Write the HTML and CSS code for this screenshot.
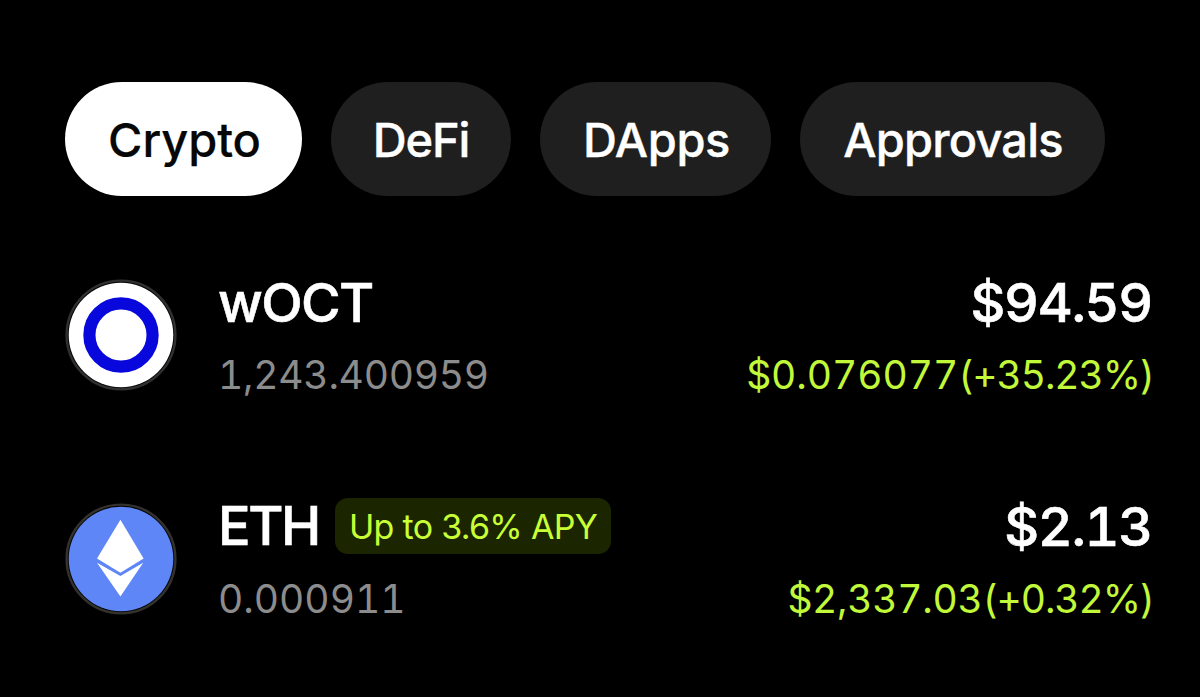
FILE: index.html
```html
<!DOCTYPE html>
<html lang="en">
<head>
<meta charset="utf-8">
<title>Wallet assets</title>
<link rel="stylesheet" href="styles.css">
</head>
<body>
<main class="wallet">
  <nav class="tabs">
    <button class="tab tab-crypto active"><span>Crypto</span></button>
    <button class="tab tab-defi"><span>DeFi</span></button>
    <button class="tab tab-dapps"><span>DApps</span></button>
    <button class="tab tab-approvals"><span>Approvals</span></button>
  </nav>
  <section class="assets">
    <article class="asset">
      <svg class="coin" viewBox="0 0 112 112">
        <circle cx="56" cy="56" r="54.4" fill="#050505" stroke="#303030" stroke-width="2.4"/>
        <circle cx="56" cy="56" r="52.3" fill="#fff"/>
        <circle cx="56" cy="56" r="31.6" fill="none" stroke="#0808dc" stroke-width="12.2"/>
      </svg>
      <div class="info">
        <div class="title"><span class="name woct">wOCT</span></div>
        <div class="amount">1,243.400959</div>
      </div>
      <div class="worth">
        <div class="value">$94.59</div>
        <div class="price price-woct">$0.076077<span class="change">(+35.23%)</span></div>
      </div>
    </article>
    <article class="asset">
      <svg class="coin" viewBox="0 0 112 112">
        <circle cx="56" cy="56" r="54.4" fill="#050505" stroke="#34322d" stroke-width="2.4"/>
        <circle cx="56" cy="56" r="52.3" fill="#5f86f6"/>
        <path d="M55.4 16.8 78.6 55.6 55.4 69.8 32 55.6Z" fill="#fff"/>
        <path d="M32 59.8 55.4 73.1 78.2 59.8 55.4 93.4Z" fill="#fff"/>
      </svg>
      <div class="info">
        <div class="title"><span class="name eth">ETH</span><span class="badge"><span>Up to 3.6% APY</span></span></div>
        <div class="amount amount-eth">0.000911</div>
      </div>
      <div class="worth">
        <div class="value">$2.13</div>
        <div class="price price-eth">$2,337.03<span class="change">(+0.32%)</span></div>
      </div>
    </article>
  </section>
</main>
</body>
</html>
```
FILE: styles.css
```css
* { box-sizing: border-box; }
body {
  margin: 0;
  background: #000;
  color: #fff;
  font-family: Inter, "Liberation Sans", sans-serif;
  white-space: nowrap;
}
.wallet { height: 697px; padding: 82px 46px 0 65px; overflow: hidden; }
.tabs { display: flex; height: 114px; }
.tab {
  display: flex;
  align-items: center;
  justify-content: center;
  height: 114px;
  padding: 2px 0 0;
  border: 0;
  border-radius: 57px;
  background: #1f1f1f;
  color: #fff;
  font: 500 47px/56px Inter, "Liberation Sans", sans-serif;
  -webkit-text-stroke: 0.4px currentColor;
}
.tab.active { background: #fff; color: #070707; }
.tab-crypto { width: 237px; margin-right: 29px; padding-left: 2px; letter-spacing: -0.1px; -webkit-text-stroke-width: 0.2px; }
.tab-defi { width: 180px; margin-right: 29px; letter-spacing: -1.1px; }
.tab-dapps { width: 231px; margin-right: 29px; padding-left: 2px; letter-spacing: -0.4px; }
.tab-approvals { width: 305px; padding-left: 1px; letter-spacing: -0.8px; }
.assets { display: flex; flex-direction: column; gap: 95.5px; padding-top: 76px; }
.asset { display: flex; height: 128px; }
.coin { flex: none; width: 112px; height: 112px; margin: 7px 41px 0 0; }
.info { flex: 1; }
.title { display: flex; align-items: center; height: 60px; }
.name, .value {
  font-size: 54px;
  line-height: 60px;
  font-weight: 500;
  letter-spacing: -1.6px;
  -webkit-text-stroke: 0.6px currentColor;
}
.name { padding-top: 1px; }
.eth { width: 101px; letter-spacing: -2.4px; }
.value {
  height: 60px;
  padding: 1px 2px 0 0;
  letter-spacing: -1.3px;
  font-feature-settings: "tnum";
}
.amount, .price {
  margin-top: 18px;
  font-size: 39px;
  line-height: 50px;
  font-feature-settings: "tnum";
}
.amount { color: #8c8c8c; letter-spacing: -0.25px; }
.amount-eth { letter-spacing: 0; }
.price { color: #c2f83a; }
.price-woct { letter-spacing: -0.05px; }
.price-woct .change { letter-spacing: -1.1px; }
.price-eth { letter-spacing: -0.3px; }
.price-eth .change { letter-spacing: -1.1px; }
.worth { text-align: right; }
.badge {
  display: flex;
  align-items: center;
  justify-content: center;
  width: 276px;
  height: 56px;
  margin: 1px 0 0 16px;
  border-radius: 13px;
  background: #1b2500;
  color: #c8ff35;
  font-size: 34px;
  letter-spacing: -0.7px;
}
```
